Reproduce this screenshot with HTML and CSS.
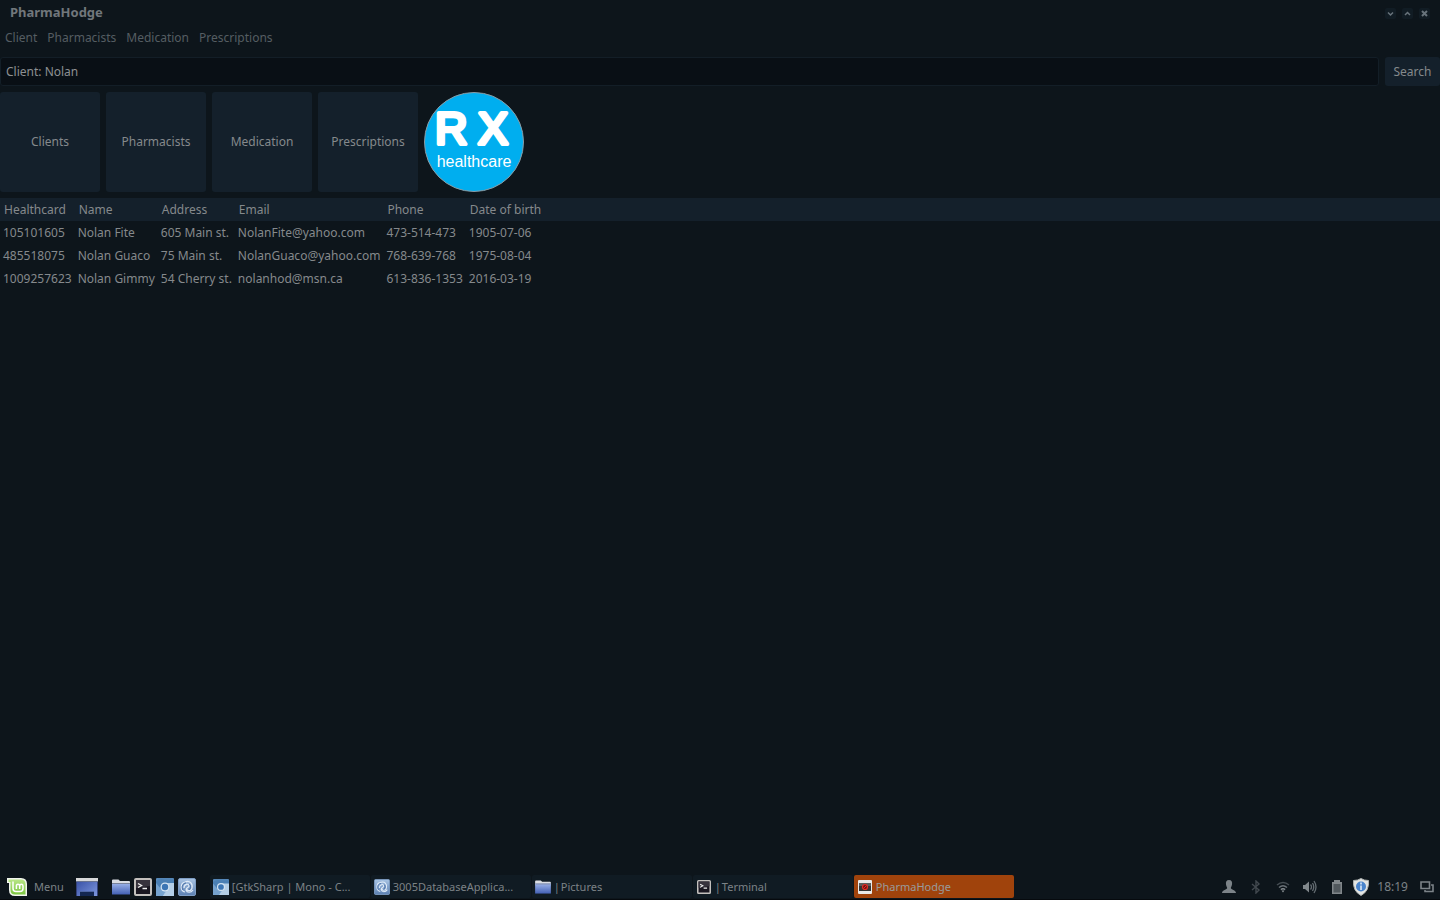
FILE: index.html
```html
<!DOCTYPE html>
<html lang="en">
<head>
<meta charset="utf-8">
<title>PharmaHodge</title>
<link rel="stylesheet" href="styles.css">
</head>
<body>
<svg class="defs" aria-hidden="true">
  <defs>
    <linearGradient id="blue" x1="0" y1="0" x2="0" y2="1"><stop offset="0" stop-color="#9db4ea"/><stop offset="1" stop-color="#4360b4"/></linearGradient>
    <linearGradient id="sky" x1="0" y1="0" x2="0" y2="1"><stop offset="0" stop-color="#5285b8"/><stop offset="1" stop-color="#a8c8e4"/></linearGradient>
    <linearGradient id="slate" x1="0" y1="0" x2="0" y2="1"><stop offset="0" stop-color="#a9c4e4"/><stop offset="1" stop-color="#5c80b2"/></linearGradient>
    <linearGradient id="mint" x1="0" y1="0" x2="0" y2="1"><stop offset="0" stop-color="#b9e686"/><stop offset="1" stop-color="#7cc540"/></linearGradient>
    <linearGradient id="desk" x1="0" y1="0" x2="1" y2="1"><stop offset="0" stop-color="#3049a0"/><stop offset="1" stop-color="#7f98de"/></linearGradient>
    <symbol id="folder" viewBox="0 0 18 16">
      <path d="M0 2V1.500Q0 .5 1 .5H6.500L8 2H17Q18 2 18 3V6H0z" fill="#d9dce2"/>
      <path d="M0 4H18V15.500H0z" fill="url(#blue)"/>
      <path d="M0 4.500H18" stroke="#78829b"/>
    </symbol>
    <symbol id="terminal" viewBox="0 0 18 18">
      <rect x="1" y="1" width="16" height="16" rx="1" fill="#191620" stroke="#c3c0bd" stroke-width="2"/>
      <path d="M2 2H16V8L2 10z" fill="#37333d"/>
      <path d="M4 5.500L7.500 7.500L4 9.500M8.500 10.500H13" fill="none" stroke="#eee" stroke-width="1.400"/>
    </symbol>
    <symbol id="chromium" viewBox="0 0 18 18">
      <rect width="18" height="18" rx="1" fill="url(#sky)"/>
      <path d="M0 3Q4 0 9 1.500L18 1.500V6H9L5 11 0 7z" fill="#4b80b4"/>
      <path d="M0 5L5 11 9 14 7 18H0z" fill="#76a3cf"/>
      <path d="M9 5H18V18H7L13 10z" fill="#b4cee6"/>
      <circle cx="9" cy="9" r="4.500" fill="#d4e4f2"/><circle cx="9" cy="9" r="3.200" fill="#3c76b4"/>
    </symbol>
    <symbol id="mono" viewBox="0 0 18 18">
      <rect x=".5" y=".5" width="17" height="17" rx="1.500" fill="url(#slate)" stroke="#7e9dc4"/>
      <path d="M7 14C2 13 2 5 7 4C12 2 15 6 14 10C13 14 8 13 9 10M6 10C6 6 11 5 11 8C11 10 8 9 8 12C9 15 13 15 15 12" fill="none" stroke="#dfeaf7" stroke-width="1.200"/>
      <path d="M5 12C3 9 5 5 8 5M11 12C13 10 13 7 11 6" fill="none" stroke="#486fa7"/>
    </symbol>
  </defs>
</svg>
<div class="window">
  <header class="titlebar">
    <h1 class="title">PharmaHodge</h1>
    <div class="window-controls">
      <button class="control" aria-label="Minimize"><svg viewBox="0 0 11 11"><path d="M3 4.500L5.500 7L8 4.500"/></svg></button>
      <button class="control" aria-label="Maximize"><svg viewBox="0 0 11 11"><path d="M3 7L5.500 4.500L8 7"/></svg></button>
      <button class="control" aria-label="Close"><svg viewBox="0 0 11 11"><path d="M3 3L8 8M8 3L3 8" stroke-width="2"/></svg></button>
    </div>
  </header>
  <nav class="menubar">
    <button>Client</button><button>Pharmacists</button><button>Medication</button><button>Prescriptions</button>
  </nav>
  <form class="search">
    <input class="search-input" type="text" value="Client: Nolan" aria-label="Search query">
    <button class="search-button" type="button">Search</button>
  </form>
  <div class="tiles">
    <button class="tile">Clients</button>
    <button class="tile">Pharmacists</button>
    <button class="tile">Medication</button>
    <button class="tile">Prescriptions</button>
    <svg class="logo" viewBox="0 0 100 100" role="img" aria-label="RX healthcare">
      <circle cx="50" cy="50" r="49.500" fill="#00aeef" stroke="#8b9ba3"/>
      <text class="logo-rx" x="11 54" y="52">RX</text>
      <text class="logo-name" x="50" y="75" text-anchor="middle">healthcare</text>
    </svg>
  </div>
  <main class="results">
    <table>
      <thead><tr><th>Healthcard</th><th>Name</th><th>Address</th><th>Email</th><th>Phone</th><th>Date of birth</th></tr></thead>
      <tbody>
        <tr><td>105101605</td><td>Nolan Fite</td><td>605 Main st.</td><td>NolanFite@yahoo.com</td><td>473-514-473</td><td>1905-07-06</td></tr>
        <tr><td>485518075</td><td>Nolan Guaco</td><td>75 Main st.</td><td>NolanGuaco@yahoo.com</td><td>768-639-768</td><td>1975-08-04</td></tr>
        <tr><td>1009257623</td><td>Nolan Gimmy</td><td>54 Cherry st.</td><td>nolanhod@msn.ca</td><td>613-836-1353</td><td>2016-03-19</td></tr>
      </tbody>
    </table>
  </main>
</div>
<footer class="taskbar">
  <button class="menu-button">
    <svg width="20" height="18" viewBox="0 0 20 18"><path d="M0 0H14Q20 0 20 6V18H8Q2 18 2 12V5H0z" fill="#f2f5ee"/><path d="M1.500 1.500H14Q18.500 1.500 18.500 6V16.500H8Q3.500 16.500 3.500 12V4H1.500z" fill="url(#mint)"/><path d="M6 3.500V10.500Q6 13.500 9 13.500H13Q16 13.500 16 10.500V8Q16 6.300 14.400 6.300T12.700 8V11M12.700 8Q12.700 6.300 11 6.300T9.400 8V11" fill="none" stroke="#fff" stroke-width="1.500"/></svg>
    Menu
  </button>
  <div class="launchers">
    <button class="show-desktop" aria-label="Show desktop"><svg width="22" height="18" viewBox="0 0 22 18"><rect width="22" height="18" fill="url(#desk)"/><path d="M.5 0V18M21.500 0V18" stroke="#34427b"/><path d="M0 0H22V3H0z" fill="#d7d8da"/><path d="M0 3.500H22" stroke="#67728f"/><path d="M4 18V13H18V18z" fill="#142750"/><path d="M4 13.500H18" stroke="#5067a4"/></svg></button>
    <button aria-label="Files"><svg width="18" height="16"><use href="#folder"/></svg></button>
    <button aria-label="Terminal"><svg width="18" height="18"><use href="#terminal"/></svg></button>
    <button aria-label="Chromium"><svg width="18" height="18"><use href="#chromium"/></svg></button>
    <button aria-label="MonoDevelop"><svg width="18" height="18"><use href="#mono"/></svg></button>
  </div>
  <div class="tasks">
    <button class="task"><svg width="16" height="16"><use href="#chromium"/></svg><span>[GtkSharp | Mono - C...</span></button>
    <button class="task"><svg width="16" height="16"><use href="#mono"/></svg><span>3005DatabaseApplica...</span></button>
    <button class="task"><svg width="16" height="14"><use href="#folder"/></svg><span class="grouped"><span>|</span><span>Pictures</span></span></button>
    <button class="task"><svg width="16" height="14"><use href="#terminal"/></svg><span class="grouped"><span>|</span><span>Terminal</span></span></button>
    <button class="task active"><svg width="16" height="14" viewBox="0 0 16 14"><rect x="1" width="14" height="14" rx="1" fill="#e9e9e9"/><path d="M2 3H14V11H2z" fill="#343434"/><path d="M2 3H14V6H2z" fill="#5b5b5b"/><circle cx="8" cy="7" r="2.500" fill="#611" stroke="#e42a24" stroke-width="1.200"/><path d="M6.500 8.500L9.500 5.500" stroke="#e42a24"/></svg><span>PharmaHodge</span></button>
  </div>
  <div class="tray">
    <svg width="14" height="14" viewBox="0 0 14 14"><path d="M7 0C9.500 0 10.500 2 10 4.500C9.800 6 9 7 8.800 8C8.800 9.500 14 10 14 13H0C0 10 5.200 9.500 5.200 8C5 7 4.200 6 4 4.500C3.500 2 4.500 0 7 0z" fill="#7c8388"/></svg>
    <svg class="bluetooth" width="10" height="14" viewBox="0 0 10 14"><path d="M1 4L8 10L5 13V1L8 4L1 10" fill="none" stroke="#42494f" stroke-width="1.400"/></svg>
    <svg width="14" height="12" viewBox="0 0 14 12"><g fill="none" stroke-width="1.500"><path d="M1 4Q7-1 13 4" stroke="#454d53"/><path d="M3 6.500Q7 3 11 6.500" stroke="#6a7278"/><path d="M4.800 8.500Q7 6.800 9.200 8.500" stroke="#858c91"/></g><path d="M5.500 9.500H8.500L7 11.500z" fill="#8b9296"/></svg>
    <svg width="15" height="14" viewBox="0 0 15 14"><path d="M1 5H3L7 1.500V12.500L3 9H1z" fill="#80878b"/><path d="M8.500 4.500Q10.500 7 8.500 9.500M10.500 3Q13 7 10.500 11M12 1Q16 7 12 13" fill="none" stroke="#646c72" stroke-width="1.300"/></svg>
    <svg class="battery" width="10" height="14" viewBox="0 0 10 14"><path d="M0 2H2V0H8V2H10V14H0z" fill="#80868a"/><path d="M1.500 4H8.500V12.500H1.500z" fill="#51585d"/></svg>
    <svg width="18" height="18" viewBox="0 0 18 18"><path d="M9 .5Q12 2.500 16.500 2.500Q17.500 13 9 17.500Q.5 13 1.500 2.500Q6 2.500 9 .5z" fill="#e3e5e3" stroke="#aeb2b1"/><circle cx="9" cy="8.500" r="5" fill="#4a84cc"/><path d="M9 7.500V12M9 4.500V6.500" stroke="#e4effc" stroke-width="1.500"/></svg>
    <time>18:19</time>
    <svg width="14" height="12" viewBox="0 0 14 12"><path d="M1 1H9.500V7.500H1zM11 4H13V10.500H5V9" fill="none" stroke="#7c8388" stroke-width="1.600"/></svg>
  </div>
</footer>
</body>
</html>
```

FILE: styles.css
```css
* { box-sizing: border-box; }
body {
  margin: 0;
  min-height: 100vh;
  display: flex;
  flex-direction: column;
  background: #0d151b;
  color: #85898c;
  font: 12px/17px "Noto Sans", sans-serif;
}
button, input {
  font: inherit;
  color: inherit;
  border: 0;
  margin: 0;
  padding: 0;
  background: none;
}
svg { display: block; flex: none; }
.defs { position: absolute; width: 0; height: 0; }
.window { flex: 1; display: flex; flex-direction: column; }

.titlebar {
  height: 25px;
  padding: 0 10px;
  display: flex;
  align-items: flex-start;
  justify-content: space-between;
}
.title { margin: 0; font-size: 13px; line-height: 24px; font-weight: 700; color: #71777b; }
.window-controls { display: flex; gap: 6px; padding-top: 8px; }
.control { width: 11px; height: 11px; border-radius: 2px; background: #111c24; }
.control svg { width: 11px; height: 11px; fill: none; stroke: #68737b; stroke-width: 1.500; }

.menubar { display: flex; gap: 10px; height: 32px; padding: 4px 5px 11px; color: #555d62; }

.search { display: flex; gap: 6px; height: 29px; }
.search-input {
  flex: 1;
  min-width: 0;
  padding: 0 5px;
  border: 1px solid #131e27;
  border-radius: 3px;
  background: #090f15;
  color: #8d9092;
}
.search-button { width: 55px; border-radius: 3px; background: #14202b; }

.tiles { display: flex; gap: 6px; padding: 6px 0; }
.tile { width: 100px; height: 100px; padding-bottom: 2px; border-radius: 3px; background: #14202b; }
.logo { width: 100px; height: 100px; }
.logo-rx {
  font: 45px "Liberation Sans", sans-serif;
  fill: #fff;
  stroke: #fff;
  stroke-width: 4;
  stroke-linejoin: round;
}
.logo-name { font: 16px "Liberation Sans", sans-serif; fill: #fff; }

.results { flex: 1; }
table { width: 100%; border-collapse: collapse; }
th, td { padding: 3px; text-align: left; font-weight: 400; white-space: nowrap; }
th { padding: 3px 4px; background: #14202b; }
th:last-child { width: 100%; }

.taskbar { height: 25px; display: flex; padding-bottom: 1px; border-bottom: 1px solid #060a0e; color: #7c8286; }
.menu-button { display: flex; align-items: center; gap: 7px; padding: 0 7px; font-size: 11px; }
.launchers { display: flex; align-items: center; gap: 4px; padding: 0 14px 0 5px; }
.show-desktop { margin-right: 10px; }
.tasks { flex: 1; min-width: 0; display: flex; gap: 1px; }
.task {
  flex: 0 1 160px;
  min-width: 0;
  display: flex;
  align-items: center;
  gap: 3px;
  padding: 0 3px;
  border-radius: 2px;
  background: #101b23;
  font-size: 11px;
  white-space: nowrap;
}
.grouped { display: flex; gap: 1px; }
.task.active { background: #a0430c; color: #999b9b; }
.tray { display: flex; align-items: center; gap: 12px; padding-right: 6px; }
.bluetooth { margin: 0 3px; }
.battery { margin: 0 -2px 0 3px; }
.tray time { margin-left: -5px; }
```
